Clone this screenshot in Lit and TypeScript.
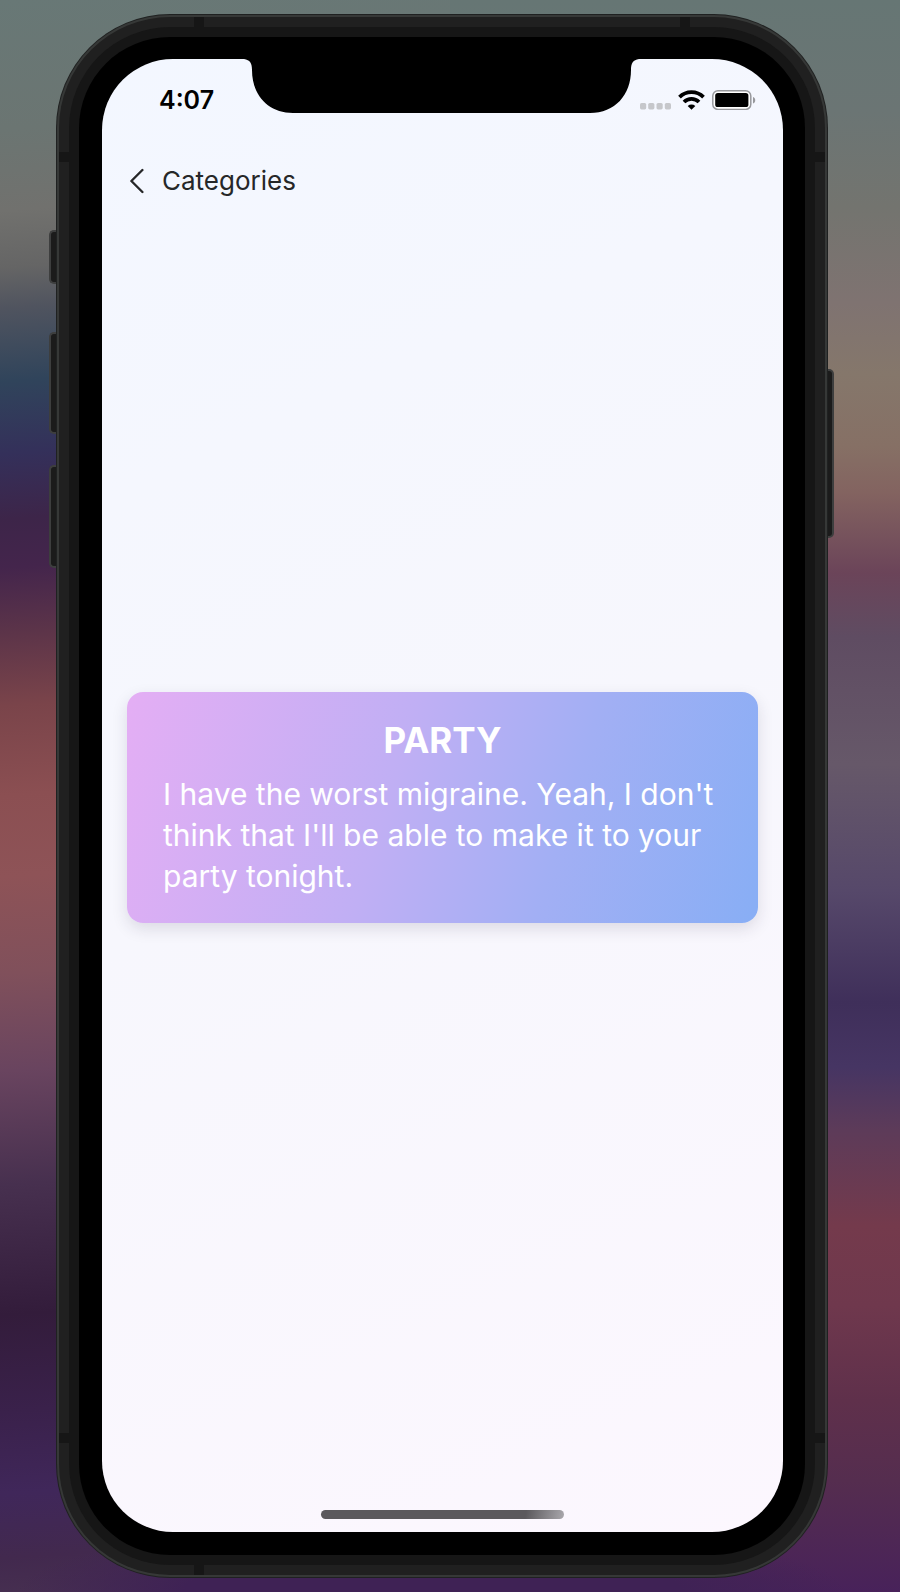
import { LitElement, html, css, svg } from "lit";
import { customElement, property } from "lit/decorators.js";

@customElement("status-bar")
class StatusBar extends LitElement {
  @property() time = "";

  static styles = css`
    :host {
      display: grid;
      grid-template-columns: 1fr auto 1fr;
      height: 54px;
    }
    .time {
      padding: 26px 0 0 57px;
      font-size: 25px;
      font-weight: 600;
      line-height: 30px;
      color: #000;
    }
    .notch {
      display: block;
      width: 397px;
      height: 54px;
    }
    .icons {
      display: flex;
      justify-content: flex-end;
      align-items: flex-end;
      gap: 7px;
      height: 20px;
      padding: 31px 27px 0 0;
    }
    .icons svg {
      display: block;
    }
  `;

  render() {
    return html`
      <time class="time">${this.time}</time>
      <svg class="notch" viewBox="-1 0 397 54" aria-hidden="true">
        <path
          d="M0 0C6 1 8 4 8 11C8 36 24 54 49 54H346C371 54 387 36 387 11C387 4 389 1 395 0Z"
          fill="#000"
        />
      </svg>
      <div class="icons">
        <svg width="31" height="20" viewBox="0 0 31 20" aria-label="No signal">
          ${[0, 8.2, 16.5, 24.8].map(
            (x) => svg`<rect x=${x} y="13" width="6.2" height="6.4" rx="1.6" fill="#c6c7cb" />`
          )}
        </svg>
        <svg width="27" height="20" viewBox="0 0 27 20" aria-label="Wi-Fi">
          <g fill="none" stroke="#000" stroke-width="3.8">
            <path d="M1.5 7.1a17 17 0 0 1 24 0" />
            <path d="M6 12a10.7 10.7 0 0 1 15 0" />
          </g>
          <path d="M13.5 19.8L9.7 15.9a5.6 5.6 0 0 1 7.6 0Z" fill="#000" />
        </svg>
        <svg width="44" height="20" viewBox="0 0 44 20" aria-label="Battery full">
          <rect x="0.8" y="0.8" width="38" height="18.6" rx="5.2" fill="#fff" stroke="#97989c" stroke-width="1.5" />
          <rect x="3.2" y="3.1" width="33.2" height="14" rx="2.6" fill="#000" />
          <path d="M41 7c3 .8 3 5.600 0 6.400Z" fill="#97989c" />
        </svg>
      </div>
    `;
  }
}

@customElement("excuse-card")
class ExcuseCard extends LitElement {
  @property() heading = "";
  @property() text = "";

  static styles = css`
    :host {
      display: block;
    }
    .card {
      padding: 27px 36px 26px;
      border-radius: 16px;
      color: #fff;
      background: linear-gradient(107deg, #e4aef4 0%, #c0aff4 42%, #a2aff4 68%, #88aef5 100%);
      box-shadow: 0 6px 16px rgba(40, 30, 60, 0.13);
    }
    .heading {
      margin: 0 0 13px;
      font-size: 35px;
      font-weight: 700;
      line-height: 42px;
      text-align: center;
    }
    .text {
      margin: 0;
      font-size: 30px;
      line-height: 41px;
    }
  `;

  render() {
    return html`
      <article class="card">
        <h1 class="heading">${this.heading}</h1>
        <p class="text">${this.text}</p>
      </article>
    `;
  }
}

@customElement("app-root")
class AppRoot extends LitElement {
  static styles = css`
    :host {
      display: flex;
      box-sizing: border-box;
      min-height: 100vh;
      padding: 14px 72px 14px 56px;
      font-family: Inter, "Liberation Sans", sans-serif;
      background:
        radial-gradient(ellipse 46% 70px at 48% 100%, #3f2255 60%, transparent) no-repeat,
        linear-gradient(
            176deg,
            #687876 0%, #6b7572 8%, #71716e 13%, #656565 16.500%, #50545f 19%,
            #30445b 23.500%, #34305a 28%, #3d2549 32%, #44254c 35%, #5c3449 39%,
            #7a444a 43.500%, #8b4f52 49%, #8e5357 54%, #80505b 60%, #69445f 66%,
            #47304f 73%, #331c3b 81%, #3a214b 87%, #40275a 92%, #42294e 96%, #493352 100%
          )
          left / 50% 100% no-repeat,
        linear-gradient(
            180deg,
            #667674 0%, #6b7574 7%, #73746f 13%, #7f7371 19%, #85776b 23.500%,
            #867065 28%, #836360 31%, #6b4459 36%, #5f4c62 40%, #665869 48%,
            #56486a 56%, #3f2f5a 63%, #463563 67%, #5d3b59 71%, #743a4c 77%,
            #6f384d 82%, #5f304b 88%, #552d4f 93%, #48225a 100%
          )
          right / 50% 100% no-repeat;
    }
    .phone {
      position: relative;
      flex: 1;
      display: flex;
    }
    .rim,
    .band,
    .inner-band,
    .bezel {
      flex: 1;
      display: flex;
      min-width: 0;
    }
    .rim {
      position: relative;
      padding: 2px;
      border: 1px solid rgba(26, 28, 28, 0.8);
      border-radius: 114px;
      background: #363837;
    }
    .band {
      padding: 10px;
      border-radius: 111px;
      background: #202020;
    }
    .inner-band {
      padding: 10px;
      border-radius: 101px;
      background: #161616;
    }
    .bezel {
      padding: 22px 22px 23px 23px;
      border-radius: 91px;
      background: #000;
    }
    .screen {
      flex: 1;
      display: flex;
      flex-direction: column;
      min-width: 0;
      overflow: hidden;
      border-radius: 71px;
      background: linear-gradient(155deg, #f3f7ff 0%, #f7f7fd 50%, #fcf7fe 100%);
    }
    .seam {
      position: absolute;
      background: #161616;
    }
    .seam.top,
    .seam.bottom {
      width: 10px;
      height: 10px;
    }
    .seam.top {
      top: 2px;
    }
    .seam.bottom {
      bottom: 2px;
    }
    .seam.near {
      left: 137px;
    }
    .seam.far {
      right: 137px;
    }
    .seam.left,
    .seam.right {
      width: 10px;
      height: 10px;
    }
    .seam.left {
      left: 2px;
    }
    .seam.right {
      right: 2px;
    }
    .seam.upper {
      top: 137px;
    }
    .seam.lower {
      bottom: 134px;
    }
    .key {
      position: absolute;
      box-sizing: border-box;
      width: 8px;
      border: 2px solid #3d3e3e;
      background: #1b1b1b;
    }
    .key.left {
      left: -7px;
      border-right: 0;
      border-radius: 5px 0 0 5px;
    }
    .key.right {
      right: -6px;
      border-left: 0;
      border-radius: 0 5px 5px 0;
    }
    .mute {
      top: 216px;
      height: 54px;
    }
    .volume-up {
      top: 318px;
      height: 102px;
    }
    .volume-down {
      top: 451px;
      height: 103px;
    }
    .power {
      top: 355px;
      height: 169px;
    }
    .nav {
      padding: 52px 24px 0;
    }
    .back {
      display: inline-flex;
      align-items: center;
      gap: 18px;
      padding: 0 4px;
      border: 0;
      background: none;
      color: #262728;
      font: 400 26px/32px Inter, "Liberation Sans", sans-serif;
      cursor: pointer;
    }
    .back svg {
      display: block;
    }
    .main {
      flex: 1;
      display: flex;
      flex-direction: column;
      justify-content: center;
      padding: 0 25px;
    }
    .home {
      display: flex;
      justify-content: center;
      padding: 94px 0 13px;
    }
    .indicator {
      width: 243px;
      height: 9px;
      border-radius: 5px;
      background: linear-gradient(100deg, #5b595d 0%, #5b595d 84%, #a9a7ac 100%);
    }
  `;

  render() {
    return html`
      <div class="phone">
        <span class="key left mute"></span>
        <span class="key left volume-up"></span>
        <span class="key left volume-down"></span>
        <span class="key right power"></span>
        <div class="rim">
          <div class="band">
            <div class="inner-band">
              <div class="bezel">
                <div class="screen">
                  <status-bar time="4:07"></status-bar>
                  <nav class="nav">
                    <button class="back" type="button">
                      <svg width="14" height="26" viewBox="0 0 14 26" aria-hidden="true">
                        <path
                          d="M12.400 2L1.400 13L12.400 24"
                          fill="none"
                          stroke="currentColor"
                          stroke-width="2.4"
                          stroke-linecap="round"
                          stroke-linejoin="round"
                        />
                      </svg>
                      Categories
                    </button>
                  </nav>
                  <main class="main">
                    <excuse-card
                      heading="PARTY"
                      text="I have the worst migraine. Yeah, I don't think that I'll be able to make it to your party tonight."
                    ></excuse-card>
                  </main>
                  <div class="home"><div class="indicator"></div></div>
                </div>
              </div>
            </div>
          </div>
          <span class="seam top near"></span>
          <span class="seam top far"></span>
          <span class="seam bottom near"></span>
          <span class="seam left upper"></span>
          <span class="seam right upper"></span>
          <span class="seam left lower"></span>
          <span class="seam right lower"></span>
        </div>
      </div>
    `;
  }
}
